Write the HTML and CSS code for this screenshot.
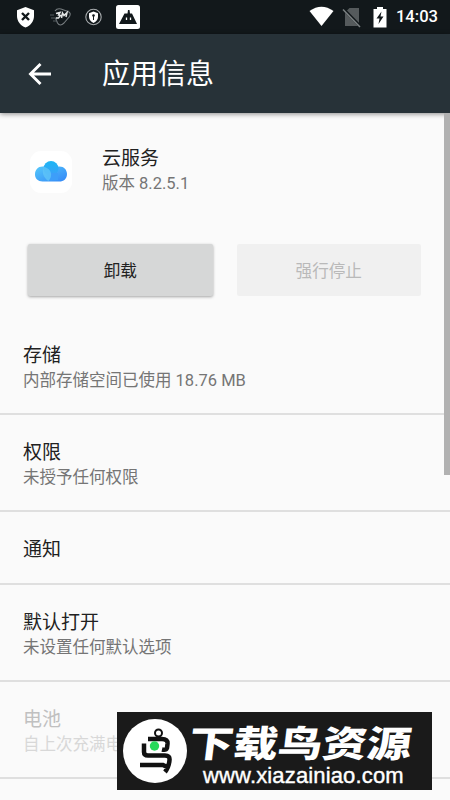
FILE: index.html
```html
<!DOCTYPE html>
<html lang="zh-CN">
<head>
    <meta charset="UTF-8">
    <meta name="viewport" content="width=device-width, initial-scale=1.0">
    <title>应用信息</title>
    <link rel="stylesheet" href="styles.css">
</head>
<body>
    <div class="status-bar">
        <svg class="status-left" width="150" height="34" viewBox="0 0 150 34">
            <path d="M25.5 7 L34 10.2 V16 C34 21.500 30.500 25.500 25.500 27.500 C20.500 25.500 17 21.500 17 16 V10.200 Z" fill="#fff"/>
            <path d="M22 13 L29 20 M29 13 L22 20" stroke="#12181b" stroke-width="2.400"/>
            <path d="M55 11 Q57 8 61 9 L68 11.500 Q71.500 13 69.500 16.500 L64 23 Q60 27 57.500 23 L55.500 18" fill="none" stroke="#777d80" stroke-width="1.100"/>
            <path d="M50 15 H54 M51 18 H56 M53 21 H57" stroke="#555c60"/>
            <path d="M56 13.500 L60 12.500 L58.500 15 L60.500 15.500 L58.500 18 L56 18 M61.500 18 L62.500 13 L64 15.500 L67 12.500 L66 17" fill="none" stroke="#e4e6e6" stroke-width="1.500"/>
            <circle cx="93.500" cy="17" r="7.700" fill="none" stroke="#a7abad" stroke-width="1.100"/>
            <path d="M93.500 11.500 L98 13.200 V16.500 Q98 20.500 93.500 23 Q89 20.500 89 16.500 V13.200 Z" fill="#fff"/>
            <path d="M93.500 16 V20" stroke="#12181b"/>
            <circle cx="93.500" cy="15.500" r="1.300" fill="#12181b"/>
            <rect x="116" y="5" width="24" height="24" rx="2.500" fill="#fff"/>
            <path d="M119 24 L124.500 13.500 H127.500 L128 10 H129.500 L130 13.500 H132 L137 24 Z" fill="#12181b"/>
            <path d="M126.500 17.500 V20 M130.500 17.500 V20" stroke="#fff" stroke-width="1.300"/>
        </svg>
        <div class="status-right">
            <svg width="80" height="34" viewBox="0 0 80 34">
                <path d="M0.500 11 Q12.500 2.500 24.500 11 L12.500 26 Z" fill="#fff"/>
                <path d="M40.500 8 H50 V26 H36 V12.500 Z" fill="#555a5c"/>
                <path d="M34 8.500 L51.500 26.500" stroke="#12181b" stroke-width="3"/>
                <path d="M34 9.500 L51 27" stroke="#7b8082" stroke-width="1.500"/>
                <path d="M68 7 H74 V9 H77.500 V27.500 H64.500 V9 H68 Z" fill="#fff"/>
                <path d="M72.500 11.500 L67.500 18.500 H70.500 L69.500 24 L74.500 16.500 H71.500 Z" fill="#12181b"/>
            </svg>
            <span class="clock">14:03</span>
        </div>
    </div>
    <header class="toolbar">
        <svg class="back" width="24" height="24" viewBox="0 0 24 24">
            <path d="M23 12 H3 M12.500 2 L2.500 12 L12.500 22" fill="none" stroke="#fff" stroke-width="2.900"/>
        </svg>
        <h1>应用信息</h1>
    </header>
    <main class="content">
        <section class="app">
            <svg class="app-icon" width="42" height="42" viewBox="0 0 42 42">
                <defs>
                    <linearGradient id="cloud" x1="0" y1="0" x2="1" y2="1">
                        <stop offset="0" stop-color="#55c9fb"/>
                        <stop offset="1" stop-color="#3487f7"/>
                    </linearGradient>
                    <linearGradient id="puff" x1="0" y1="0" x2="0" y2="1">
                        <stop offset="0" stop-color="#1db6f4"/>
                        <stop offset="1" stop-color="#3ca1f8"/>
                    </linearGradient>
                </defs>
                <rect width="42" height="42" rx="11" fill="#fff"/>
                <path d="M12.500 15.500 C17 15.500 20 18.500 21 22 C21 19 24.500 15.500 29.500 15.500 C34 15.500 37 19 37 23 C37 28 33.500 30.500 29.500 30.500 H12.500 C8 30.500 5 27.500 5 23.500 C5 19 8 15.500 12.500 15.500 Z" fill="url(#cloud)"/>
                <circle cx="21" cy="17.500" r="7.500" fill="url(#puff)"/>
                <path d="M18 22 H28 V29 H18 Z" fill="#3d9ef9"/>
                <path d="M13.500 15.500 C22 18 23 25 18.500 30 C13 27 11.500 20 13.500 15.500 Z" fill="#5fc4f8" opacity=".8"/>
            </svg>
            <div class="app-text">
                <div class="name">云服务</div>
                <div class="summary">版本 8.2.5.1</div>
            </div>
        </section>
        <div class="buttons">
            <button class="btn">卸载</button>
            <button class="btn disabled" disabled>强行停止</button>
        </div>
        <div class="list">
            <div class="row">
                <div class="name">存储</div>
                <div class="summary">内部存储空间已使用 18.76 MB</div>
            </div>
            <div class="row">
                <div class="name">权限</div>
                <div class="summary">未授予任何权限</div>
            </div>
            <div class="row single">
                <div class="name">通知</div>
            </div>
            <div class="row">
                <div class="name">默认打开</div>
                <div class="summary">未设置任何默认选项</div>
            </div>
            <div class="row off">
                <div class="name">电池</div>
                <div class="summary">自上次充满电</div>
            </div>
        </div>
        <div class="scrollbar"></div>
    </main>
    <div class="banner">
        <svg class="banner-logo" width="64" height="64" viewBox="0 0 64 64">
            <circle cx="32" cy="32" r="32" fill="#fff"/>
            <circle cx="35.500" cy="14" r="3.500" fill="none" stroke="#111" stroke-width="2"/>
            <path d="M25 20 H39 Q45 20 44.500 25 L44 29 Q43 31.500 39 30.500 M21 24.500 V33 Q21 36.500 25 36.500 H42 Q47 36.500 46.500 41 Q46 48 42 53 M17 46 H40 L44 48" fill="none" stroke="#111" stroke-width="4.500"/>
            <circle cx="31.500" cy="27" r="4.700" fill="#27d95a"/>
        </svg>
        <div class="banner-text">
            <div class="banner-title">下载鸟资源</div>
            <div class="banner-url">www.xiazainiao.com</div>
        </div>
    </div>
</body>
</html>
```
FILE: styles.css
```css
* {
    box-sizing: border-box;
}
body {
    margin: 0;
    height: 800px;
    overflow: hidden;
    background-color: #fafafa;
    color: #212121;
    font-family: Roboto, "Noto Sans CJK SC", sans-serif;
}
svg {
    display: block;
    flex: none;
}
.status-bar {
    height: 34px;
    display: flex;
    justify-content: space-between;
    background-color: #12181b;
}
.status-right {
    display: flex;
    align-items: center;
    padding-right: 12px;
}
.clock {
    width: 49px;
    text-align: right;
    color: #fff;
    font-size: 16.6px;
    font-weight: 500;
    line-height: 34px;
    white-space: nowrap;
}
.toolbar {
    position: relative;
    height: 79px;
    display: flex;
    align-items: center;
    gap: 50px;
    padding-left: 28px;
    background-color: #273238;
    box-shadow: 0 1px 5px rgba(0, 0, 0, 0.45);
}
.toolbar h1 {
    margin: 0;
    padding-top: 3px;
    color: #fff;
    font-size: 28px;
    font-weight: 400;
    line-height: 40px;
}
.content {
    position: relative;
    height: 687px;
    overflow: hidden;
}
.app {
    display: flex;
    align-items: center;
    gap: 30px;
    padding: 33px 0 0 30px;
}
.app-icon {
    margin-top: 1px;
}
.name {
    font-size: 19px;
    line-height: 26px;
}
.summary {
    color: #757575;
    font-size: 16.5px;
    line-height: 24px;
}
.buttons {
    display: flex;
    gap: 24px;
    padding: 48px 29px 0 28px;
}
.btn {
    flex: 1;
    height: 52px;
    padding: 0;
    border: none;
    border-radius: 2px;
    background-color: #d6d7d7;
    color: #212121;
    font-family: inherit;
    font-size: 16.6px;
    box-shadow: 0 1px 3px rgba(0, 0, 0, 0.35);
}
.btn.disabled {
    background-color: #f0f0f0;
    color: #b9b9b9;
    box-shadow: none;
}
.list {
    padding-top: 22px;
}
.row {
    height: 97px;
    padding: 25px 23px 0;
    border-bottom: 2px solid #dfdfdf;
}
.row.single {
    height: 73px;
}
.off .name {
    color: #c0c0c0;
}
.off .summary {
    color: #d8d8d8;
}
.scrollbar {
    position: absolute;
    top: 0;
    right: 0;
    width: 6px;
    height: 362px;
    background-color: #b1b1b1;
}
/* banner over the end of the list */
.banner {
    position: absolute;
    left: 117px;
    top: 712px;
    width: 315px;
    height: 78px;
    display: flex;
    align-items: center;
    gap: 2px;
    padding-left: 6px;
    background-color: #1a1a1a;
    color: #fff;
}
.banner-text {
    display: flex;
    flex-direction: column;
    padding-top: 11px;
}
.banner-title {
    font-size: 44.5px;
    font-weight: 900;
    line-height: 38px;
    white-space: nowrap;
    transform: skewX(-7deg) scaleY(0.82);
}
.banner-url {
    padding-left: 14px;
    font-family: "Liberation Sans", Arial, sans-serif;
    font-size: 22px;
    letter-spacing: 0.15px;
    line-height: 24px;
    -webkit-text-stroke: 0.4px #fff;
}
```
